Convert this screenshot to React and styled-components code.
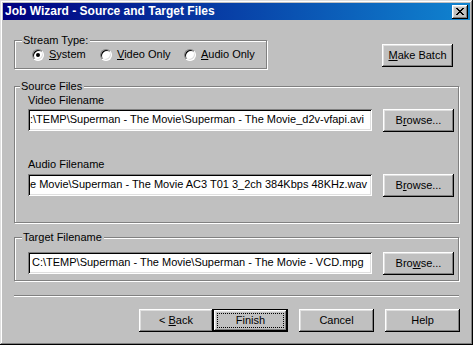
import React from 'react';
import styled, { createGlobalStyle } from 'styled-components';

const GlobalStyle = createGlobalStyle`
  html, body {
    margin: 0;
    padding: 0;
    background: #c0c0c0;
  }
  body {
    font-family: "Liberation Sans", Arial, sans-serif;
    font-size: 11px;
    color: #000;
  }
`;

const Window = styled.div`
  box-sizing: border-box;
  width: 473px;
  height: 345px;
  padding: 3px;
  background: #c0c0c0;
  box-shadow: inset -1px -1px 0 #000, inset 1px 1px 0 #dfdfdf,
    inset -2px -2px 0 #808080, inset 2px 2px 0 #fff;
  display: flex;
  flex-direction: column;
`;

const TitleBar = styled.div`
  height: 17px;
  display: flex;
  align-items: center;
  justify-content: space-between;
  padding: 0 2px 0 2px;
  background: linear-gradient(to right, #000080, #1084d0);
`;

const Title = styled.span`
  font: bold 12px "Liberation Sans", Arial, sans-serif;
  color: #fff;
  line-height: 17px;
`;

const CloseButton = styled.div`
  box-sizing: border-box;
  width: 16px;
  height: 14px;
  display: flex;
  align-items: center;
  justify-content: center;
  background: #c0c0c0;
  box-shadow: inset -1px -1px 0 #000, inset 1px 1px 0 #fff,
    inset -2px -2px 0 #808080, inset 2px 2px 0 #dfdfdf;
`;

const Body = styled.div`
  display: flex;
  flex-direction: column;
  padding-left: 11px;
`;

const TopRow = styled.div`
  display: flex;
  align-items: flex-start;
  margin-top: 20px;
`;

const Group = styled.div`
  position: relative;
  box-sizing: border-box;
  width: ${p => p.$width}px;
  height: ${p => p.$height}px;
  margin-top: ${p => p.$top || 0}px;
  padding: ${p => p.$pad || '0'};
  border: 1px solid #808080;
  box-shadow: 1px 1px 0 #fff, inset 1px 1px 0 #fff;
`;

const Legend = styled.span`
  position: absolute;
  top: -7px;
  left: ${p => p.$left}px;
  padding: 0 2px 0 1px;
  background: #c0c0c0;
  line-height: 13px;
  white-space: nowrap;
`;

const RadioRow = styled.div`
  display: flex;
  align-items: center;
  padding: 7px 0 0 17px;
`;

const RadioItem = styled.label`
  display: flex;
  align-items: center;
  width: ${p => p.$width}px;
  line-height: 13px;
`;

const RadioCircle = styled.span`
  position: relative;
  box-sizing: border-box;
  width: 12px;
  height: 12px;
  margin-right: 5px;
  border-radius: 50%;
  border: 1px solid;
  border-color: #808080 #fff #fff #808080;
  background: #fff;
  box-shadow: inset 1px 1px 0 #000, inset -1px -1px 0 #dfdfdf;

  &::after {
    content: '';
    display: ${p => (p.$checked ? 'block' : 'none')};
    position: absolute;
    left: 3px;
    top: 3px;
    width: 4px;
    height: 4px;
    border-radius: 50%;
    background: #000;
  }
`;

const Button = styled.div`
  box-sizing: border-box;
  width: ${p => p.$width || 75}px;
  height: 23px;
  margin-left: ${p => p.$left || 0}px;
  margin-top: ${p => p.$top || 0}px;
  display: flex;
  align-items: center;
  justify-content: center;
  background: #c0c0c0;
  line-height: 13px;
  white-space: pre;
  box-shadow: inset -1px -1px 0 #000, inset 1px 1px 0 #fff,
    inset -2px -2px 0 #808080, inset 2px 2px 0 #dfdfdf;
`;

const DefaultButton = styled(Button)`
  position: relative;
  border: 1px solid #000;

  &::after {
    content: '';
    position: absolute;
    left: 3px;
    top: 3px;
    right: 3px;
    bottom: 3px;
    border: 1px dotted #000;
  }
`;

const FieldLabel = styled.div`
  line-height: 13px;
  margin-top: ${p => p.$top || 0}px;
`;

const FieldRow = styled.div`
  display: flex;
  align-items: flex-start;
  margin-top: ${p => p.$top || 0}px;
`;

const TextBox = styled.div`
  box-sizing: border-box;
  width: 344px;
  height: 22px;
  margin-right: 11px;
  padding: 2px 2px 0 ${p => p.$indent}px;
  background: #fff;
  line-height: 16px;
  white-space: nowrap;
  overflow: hidden;
  box-shadow: inset 1px 1px 0 #808080, inset -1px -1px 0 #fff,
    inset 2px 2px 0 #000, inset -2px -2px 0 #dfdfdf;
`;

const Separator = styled.div`
  width: 445px;
  height: 0;
  margin-top: 14px;
  border-top: 1px solid #808080;
  border-bottom: 1px solid #fff;
`;

const Footer = styled.div`
  display: flex;
  margin-top: 12px;
  padding-left: 125px;
`;

function CloseGlyph() {
  return (
    <svg width="8" height="7" viewBox="0 0 8 7">
      <path
        fill="#000"
        d="M0 0h2v1H0zM6 0h2v1H6zM1 1h2v1H1zM5 1h2v1H5zM2 2h4v1H2zM3 3h2v1H3zM2 4h4v1H2zM1 5h2v1H1zM5 5h2v1H5zM0 6h2v1H0zM6 6h2v1H6z"
      />
    </svg>
  );
}

function Radio({ checked, width, children }) {
  return (
    <RadioItem $width={width}>
      <RadioCircle $checked={checked} />
      <span>{children}</span>
    </RadioItem>
  );
}

function App() {
  return (
    <>
      <GlobalStyle />
      <Window>
        <TitleBar>
          <Title>Job Wizard - Source and Target Files</Title>
          <CloseButton><CloseGlyph /></CloseButton>
        </TitleBar>
        <Body>
          <TopRow>
            <Group $width={253} $height={29}>
              <Legend $left={7}>Stream Type:</Legend>
              <RadioRow>
                <Radio checked width={68}><u>S</u>ystem</Radio>
                <Radio width={84}><u>V</u>ideo Only</Radio>
                <Radio width={80}><u>A</u>udio Only</Radio>
              </RadioRow>
            </Group>
            <Button $width={71} $left={115} $top={4}><u>M</u>ake Batch</Button>
          </TopRow>

          <Group $width={445} $height={137} $top={17} $pad="7px 0 0 13px">
            <Legend $left={5}>Source Files</Legend>
            <FieldLabel>Video Filename</FieldLabel>
            <FieldRow $top={2}>
              <TextBox $indent={2}>:\TEMP\Superman - The Movie\Superman - The Movie_d2v-vfapi.avi</TextBox>
              <Button $width={71}>B<u>r</u>owse...</Button>
            </FieldRow>
            <FieldLabel $top={26}>Audio Filename</FieldLabel>
            <FieldRow $top={3}>
              <TextBox $indent={2}>e Movie\Superman - The Movie AC3 T01 3_2ch 384Kbps 48KHz.wav</TextBox>
              <Button $width={71}>B<u>r</u>owse...</Button>
            </FieldRow>
          </Group>

          <Group $width={445} $height={44} $top={14} $pad="14px 0 0 13px">
            <Legend $left={7}>Target Filename</Legend>
            <FieldRow>
              <TextBox $indent={4}>C:\TEMP\Superman - The Movie\Superman - The Movie - VCD.mpg</TextBox>
              <Button $width={71}>Bro<u>w</u>se...</Button>
            </FieldRow>
          </Group>

          <Separator />

          <Footer>
            <Button $width={74}>{'< '}<u>B</u>ack</Button>
            <DefaultButton>Finish</DefaultButton>
            <Button $left={11}>Cancel</Button>
            <Button $left={11}>Help</Button>
          </Footer>
        </Body>
      </Window>
    </>
  );
}

export default App;
